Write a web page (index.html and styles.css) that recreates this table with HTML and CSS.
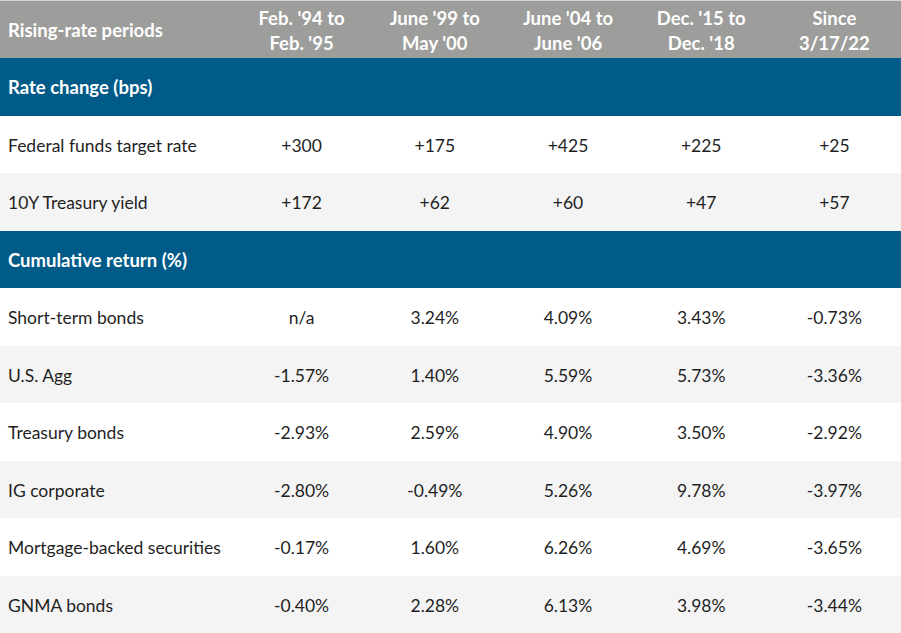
FILE: index.html
```html
<!DOCTYPE html>
<html>
<head>
<meta charset="utf-8">
<link rel="stylesheet" href="styles.css">
</head>
<body>
<div class="table">
  <div class="row head">
    <div class="label">Rising-rate periods</div>
    <div class="cell">Feb. '94 to<br>Feb. '95</div>
    <div class="cell">June '99 to<br>May '00</div>
    <div class="cell">June '04 to<br>June '06</div>
    <div class="cell">Dec. '15 to<br>Dec. '18</div>
    <div class="cell">Since<br>3/17/22</div>
  </div>
  <div class="section">Rate change (bps)</div>
  <div class="row">
    <div class="label">Federal funds target rate</div>
    <div class="cell">+300</div><div class="cell">+175</div><div class="cell">+425</div><div class="cell">+225</div><div class="cell">+25</div>
  </div>
  <div class="row alt">
    <div class="label">10Y Treasury yield</div>
    <div class="cell">+172</div><div class="cell">+62</div><div class="cell">+60</div><div class="cell">+47</div><div class="cell">+57</div>
  </div>
  <div class="section">Cumulative return (%)</div>
  <div class="row">
    <div class="label">Short-term bonds</div>
    <div class="cell">n/a</div><div class="cell">3.24%</div><div class="cell">4.09%</div><div class="cell">3.43%</div><div class="cell">-0.73%</div>
  </div>
  <div class="row alt">
    <div class="label">U.S. Agg</div>
    <div class="cell">-1.57%</div><div class="cell">1.40%</div><div class="cell">5.59%</div><div class="cell">5.73%</div><div class="cell">-3.36%</div>
  </div>
  <div class="row">
    <div class="label">Treasury bonds</div>
    <div class="cell">-2.93%</div><div class="cell">2.59%</div><div class="cell">4.90%</div><div class="cell">3.50%</div><div class="cell">-2.92%</div>
  </div>
  <div class="row alt">
    <div class="label">IG corporate</div>
    <div class="cell">-2.80%</div><div class="cell">-0.49%</div><div class="cell">5.26%</div><div class="cell">9.78%</div><div class="cell">-3.97%</div>
  </div>
  <div class="row">
    <div class="label">Mortgage-backed securities</div>
    <div class="cell">-0.17%</div><div class="cell">1.60%</div><div class="cell">6.26%</div><div class="cell">4.69%</div><div class="cell">-3.65%</div>
  </div>
  <div class="row alt">
    <div class="label">GNMA bonds</div>
    <div class="cell">-0.40%</div><div class="cell">2.28%</div><div class="cell">6.13%</div><div class="cell">3.98%</div><div class="cell">-3.44%</div>
  </div>
</div>
</body>
</html>
```
FILE: styles.css
```css
html, body {
  margin: 0;
  padding: 0;
  background: #ffffff;
}
body {
  font-family: "Lato", "Liberation Sans", sans-serif;
  font-size: 17.5px;
  color: #1f1f1f;
}
.table {
  width: 901px;
  display: flex;
  flex-direction: column;
}
.row {
  display: grid;
  grid-template-columns: 235px repeat(5, 1fr);
  align-items: center;
  height: 57.5px;
  box-sizing: border-box;
  padding-top: 2px;
  background: #ffffff;
}
.row.alt {
  background: #f4f4f4;
}
.row.head {
  height: 58px;
  background: #9d9d9b;
  color: #ffffff;
  font-weight: 700;
  font-size: 18.5px;
  line-height: 25px;
  border-top: 1px solid #d4d4d4;
  padding-top: 2px;
}
.label {
  padding-left: 8px;
}
.cell {
  text-align: center;
}
.section {
  height: 57.5px;
  box-sizing: border-box;
  padding-top: 1px;
  display: flex;
  align-items: center;
  padding-left: 8px;
  background: #005b88;
  color: #ffffff;
  font-weight: 700;
  font-size: 18.5px;
}
```
